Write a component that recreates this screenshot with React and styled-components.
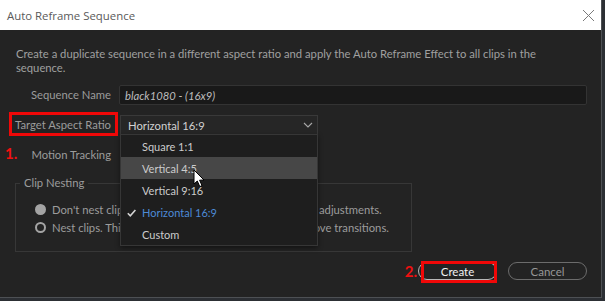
import React from 'react';
import styled, { createGlobalStyle } from 'styled-components';

const GlobalStyle = createGlobalStyle`
  body {
    margin: 0;
    background: #2c2f34;
    font-family: Lato, "Open Sans", sans-serif;
  }
`;

const Window = styled.div`
  width: 601px;
  height: 297px;
  display: flex;
  flex-direction: column;
  border-right: 1px solid #4d5054;
  border-bottom: 1px solid #4d5054;
`;

const TitleBar = styled.div`
  height: 30px;
  flex: none;
  background: #ffffff;
  display: flex;
  align-items: center;
  justify-content: space-between;
  padding: 0 6px 0 7px;
`;

const Title = styled.span`
  font-family: "Open Sans", sans-serif;
  font-size: 11.4px;
  color: #5a5a5a;
`;

const Body = styled.div`
  flex: 1;
  background: #232323;
  display: flex;
  flex-direction: column;
  padding: 17px 14px 0 14px;
  font-size: 11.25px;
`;

const Description = styled.p`
  margin: 0 0 0 2px;
  line-height: 14px;
  color: #a0a0a0;
  width: 540px;
`;

const Row = styled.div`
  display: grid;
  grid-template-columns: 97px 1fr;
  column-gap: 8px;
  align-items: center;
  margin-top: ${p => p.top}px;
  height: 20px;
  position: relative;
`;

const Label = styled.span`
  color: #9c9c9c;
  text-align: right;
  white-space: nowrap;
  line-height: 14px;
  position: relative;

  ${p => p.marked && `
    &::after {
      content: '';
      position: absolute;
      left: -5px;
      right: -7px;
      top: -6px;
      bottom: -4px;
      border: 3px solid #f00808;
    }
  `}
`;

const Step = styled.span`
  position: absolute;
  left: -9px;
  top: -1px;
  color: #f01010;
  font-weight: 700;
  font-size: 15px;
  line-height: 18px;
`;

const TextInput = styled.div`
  height: 20px;
  box-sizing: border-box;
  background: #191919;
  border: 1px solid #333;
  border-radius: 2px;
  font-style: italic;
  color: #bdbdbd;
  display: flex;
  align-items: center;
  padding-left: 5px;
`;

const Select = styled.div`
  width: 198px;
  height: 20px;
  margin-left: 1px;
  box-sizing: border-box;
  position: relative;
  border: 1px solid ${p => (p.open ? '#393939' : '#2e2e2e')};
  border-bottom-color: ${p => (p.open ? '#2a2a2a' : '#2e2e2e')};
  background: #262626;
  color: #d2d2d2;
  display: flex;
  align-items: center;
  justify-content: space-between;
  padding: 0 4px 0 7px;
  z-index: ${p => (p.open ? 5 : 1)};
`;

const Menu = styled.ul`
  list-style: none;
  margin: 0;
  padding: 0;
  position: absolute;
  top: 18px;
  left: -1px;
  right: -1px;
  background: #1e1e1e;
  border: 1px solid #363636;
  box-shadow: 0 2px 5px rgba(0, 0, 0, 0.45);
`;

const MenuItem = styled.li`
  height: 22px;
  display: flex;
  align-items: center;
  padding-left: 21px;
  position: relative;
  font-size: 11px;
  color: ${p => (p.selected ? '#4d8ad6' : '#cccccc')};
  background: ${p => (p.hover ? '#474747' : 'transparent')};
`;

const Check = styled.svg`
  position: absolute;
  left: 6px;
  top: 8px;
`;

const Cursor = styled.svg`
  position: absolute;
  left: 72px;
  top: 12px;
`;

const Fieldset = styled.fieldset`
  margin: 11px 0 0 1px;
  padding: 12px 6px 17px 19px;
  width: 397px;
  box-sizing: border-box;
  border: 1px solid #373737;
  border-radius: 0;
  display: flex;
  flex-direction: column;
  gap: 4px;
`;

const Legend = styled.legend`
  margin-left: -15px;
  padding: 0 4px;
  line-height: 14px;
  color: #9c9c9c;
`;

const RadioRow = styled.div`
  display: flex;
  align-items: center;
  gap: 6px;
  height: 14px;
  color: #9c9c9c;
  white-space: nowrap;
`;

const Radio = styled.span`
  width: 11px;
  height: 11px;
  flex: none;
  box-sizing: border-box;
  border-radius: 50%;
  border: 2px solid #a4a4a4;
  background: ${p => (p.checked ? '#a4a4a4' : 'transparent')};
`;

const Footer = styled.div`
  display: flex;
  justify-content: flex-end;
  align-items: center;
  gap: 11px;
  margin-top: 10px;
`;

const ButtonWrap = styled.div`
  position: relative;
  display: flex;
  align-items: center;
`;

const StepInline = styled.span`
  position: absolute;
  right: 100%;
  margin-right: 1px;
  color: #f01010;
  font-weight: 700;
  font-size: 15px;
`;

const Button = styled.button`
  width: 79px;
  height: 18px;
  border-radius: 9px;
  border: 1px solid ${p => (p.primary ? '#b8b8b8' : '#6c6c6c')};
  background: transparent;
  font-family: inherit;
  font-size: 11.5px;
  color: ${p => (p.primary ? '#f2f2f2' : '#979797')};
  padding: 0;
  position: relative;

  ${p => p.marked && `
    &::after {
      content: '';
      position: absolute;
      left: 2px;
      right: -1px;
      top: -2px;
      bottom: -4px;
      border: 3px solid #f00808;
    }
  `}
`;

const options = ['Square 1:1', 'Vertical 4:5', 'Vertical 9:16', 'Horizontal 16:9', 'Custom'];

const App = () => (
  <>
    <GlobalStyle />
    <Window>
      <TitleBar>
        <Title>Auto Reframe Sequence</Title>
        <svg width="13" height="13" viewBox="0 0 13 13">
          <path d="M1 1L12 12M12 1L1 12" stroke="#7a7a7a" strokeWidth="1" />
        </svg>
      </TitleBar>
      <Body>
        <Description>
          Create a duplicate sequence in a different aspect ratio and apply the Auto Reframe Effect to all clips in the
          sequence.
        </Description>

        <Row top={10}>
          <Label>Sequence Name</Label>
          <TextInput>black1080 - (16x9)</TextInput>
        </Row>

        <Row top={10}>
          <Label marked>Target Aspect Ratio</Label>
          <Select open>
            <span>Horizontal 16:9</span>
            <svg width="10" height="6" viewBox="0 0 10 6">
              <path d="M1 1L5 5L9 1" fill="none" stroke="#a8a8a8" strokeWidth="1.1" />
            </svg>
            <Menu>
              {options.map(o => (
                <MenuItem key={o} hover={o === 'Vertical 4:5'} selected={o === 'Horizontal 16:9'}>
                  {o === 'Horizontal 16:9' && (
                    <Check width="9" height="8" viewBox="0 0 9 8">
                      <path d="M0.8 4.2L3.3 6.8L8.4 1" fill="none" stroke="#d4d4d4" strokeWidth="1.6" />
                    </Check>
                  )}
                  {o}
                  {o === 'Vertical 4:5' && (
                    <Cursor width="12" height="19" viewBox="0 0 12 19">
                      <path d="M1 1L1 15L4.3 12L6.8 17.6L9 16.6L6.6 11.2L11 11Z" fill="#fff" stroke="#000" strokeWidth="1" strokeLinejoin="round" />
                    </Cursor>
                  )}
                </MenuItem>
              ))}
            </Menu>
          </Select>
        </Row>

        <Row top={10}>
          <Step>1.</Step>
          <Label>Motion Tracking</Label>
          <Select>
            <span>Default</span>
          </Select>
        </Row>

        <Fieldset>
          <Legend>Clip Nesting</Legend>
          <RadioRow>
            <Radio checked />
            Don't nest clips. Reframe will be applied using Motion adjustments.
          </RadioRow>
          <RadioRow>
            <Radio />
            Nest clips. This will nest clips into sequences and remove transitions.
          </RadioRow>
        </Fieldset>

        <Footer>
          <ButtonWrap>
            <StepInline>2.</StepInline>
            <Button primary marked>Create</Button>
          </ButtonWrap>
          <Button>Cancel</Button>
        </Footer>
      </Body>
    </Window>
  </>
);

export default App;
